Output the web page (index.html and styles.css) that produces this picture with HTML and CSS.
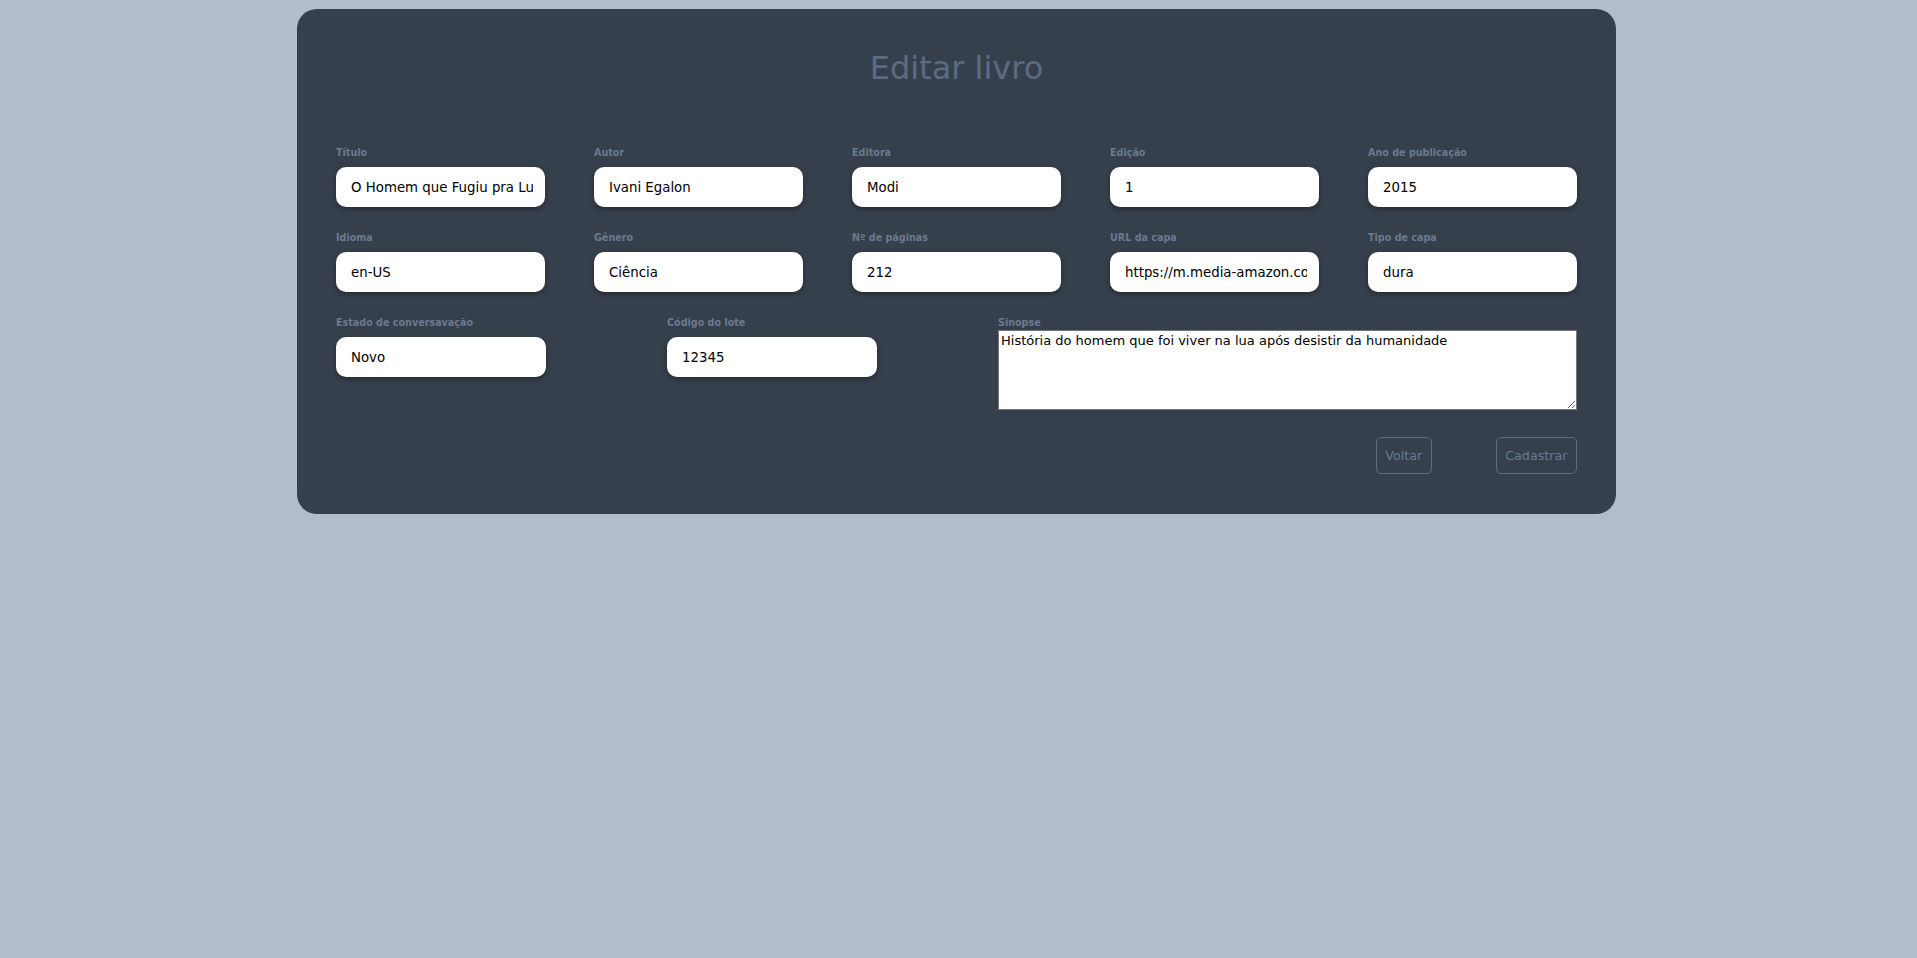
FILE: index.html
```html
<!DOCTYPE html>
<html lang="pt-BR">
<head>
<meta charset="utf-8">
<title>Editar livro</title>
<link rel="stylesheet" href="styles.css">
</head>
<body>
<main class="card">
  <h1 class="title">Editar livro</h1>
  <form class="form">
    <div class="grid-5">
      <label class="field"><span class="label">Título</span><input class="input" type="text" value="O Homem que Fugiu pra Lua"></label>
      <label class="field"><span class="label">Autor</span><input class="input" type="text" value="Ivani Egalon"></label>
      <label class="field"><span class="label">Editora</span><input class="input" type="text" value="Modi"></label>
      <label class="field"><span class="label">Edição</span><input class="input" type="text" value="1"></label>
      <label class="field"><span class="label">Ano de publicação</span><input class="input" type="text" value="2015"></label>
      <label class="field"><span class="label">Idioma</span><input class="input" type="text" value="en-US"></label>
      <label class="field"><span class="label">Gênero</span><input class="input" type="text" value="Ciência"></label>
      <label class="field"><span class="label">Nº de páginas</span><input class="input" type="text" value="212"></label>
      <label class="field"><span class="label">URL da capa</span><input class="input" type="text" value="https://m.media-amazon.com/images/capa.jpg"></label>
      <label class="field"><span class="label">Tipo de capa</span><input class="input" type="text" value="dura"></label>
    </div>
    <div class="grid-3">
      <label class="field"><span class="label">Estado de conversavação</span><input class="input input-fixed" type="text" value="Novo"></label>
      <label class="field"><span class="label">Código do lote</span><input class="input input-fixed" type="text" value="12345"></label>
      <label class="field field-tight"><span class="label">Sinopse</span><textarea class="textarea">História do homem que foi viver na lua após desistir da humanidade</textarea></label>
    </div>
    <div class="actions">
      <button type="button" class="btn">Voltar</button>
      <button type="button" class="btn">Cadastrar</button>
    </div>
  </form>
</main>
</body>
</html>
```

FILE: styles.css
```css
html, body {
  margin: 0;
  padding: 0;
}
body {
  background: #b3bdc9;
  font-family: "DejaVu Sans", Verdana, sans-serif;
  padding: 9px 4px 0 0;
  min-height: 958px;
  box-sizing: border-box;
}
.card {
  width: 1319px;
  margin: 0 auto;
  box-sizing: border-box;
  background: #363f4c;
  border-radius: 20px;
  padding: 40px 39px 40px 39px;
}
.title {
  margin: 0 0 60px 0;
  text-align: center;
  font-weight: normal;
  font-size: 32px;
  line-height: 38px;
  color: #5b6b84;
}
.form {
  display: flex;
  flex-direction: column;
}
.grid-5 {
  display: grid;
  grid-template-columns: repeat(5, 1fr);
  column-gap: 49px;
  row-gap: 25px;
}
.grid-3 {
  display: grid;
  grid-template-columns: 1fr 1fr 2fr;
  column-gap: 41.5px;
  margin-top: 25px;
  align-items: start;
}
.field {
  display: flex;
  flex-direction: column;
  gap: 8px;
  min-width: 0;
}
.field-tight {
  gap: 1px;
}
.label {
  font-size: 9.6px;
  font-weight: bold;
  line-height: 12px;
  color: #6b7a91;
}
.input {
  box-sizing: border-box;
  width: 100%;
  height: 40px;
  border: none;
  border-radius: 10px;
  background: #fff;
  padding: 0 12px 0 15px;
  font-family: "DejaVu Sans", Verdana, sans-serif;
  font-size: 13.33px;
  color: #000;
  box-shadow: 0 2px 5px rgba(0, 0, 0, 0.35);
  outline: none;
}
.input-fixed {
  width: 210px;
}
.textarea {
  box-sizing: border-box;
  width: 100%;
  height: 80px;
  margin: 0;
  border: 1px solid #767676;
  border-radius: 0;
  padding: 2px;
  background: #fff;
  font-family: "DejaVu Sans", Verdana, sans-serif;
  font-size: 13px;
  line-height: 16px;
  color: #000;
}
.actions {
  display: flex;
  justify-content: flex-end;
  gap: 64px;
  margin-top: 27px;
}
.btn {
  height: 37px;
  padding: 0 8.5px;
  background: transparent;
  border: 1px solid #5d6c82;
  border-radius: 5px;
  font-family: "DejaVu Sans", Verdana, sans-serif;
  font-size: 12.7px;
  color: #687a95;
  cursor: pointer;
}
```
